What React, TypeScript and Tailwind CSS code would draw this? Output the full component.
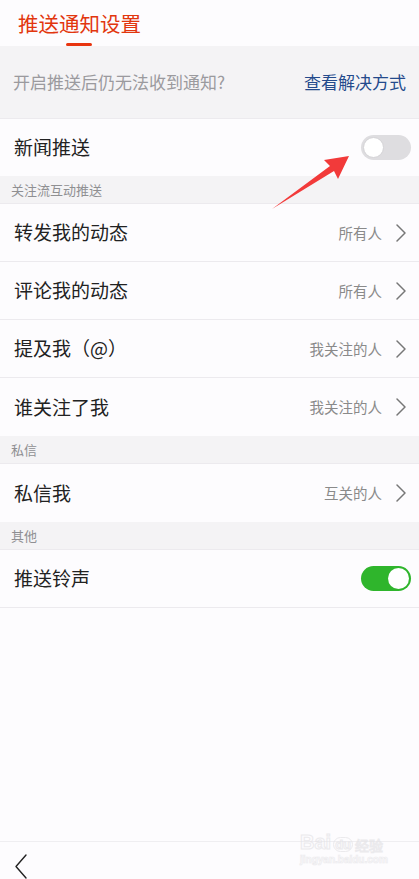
import React from "react";

const font = { fontFamily: '"Noto Sans CJK SC", "Noto Sans", sans-serif' };

function Chevron() {
  return (
    <svg width="12" height="20" viewBox="0 0 12 20" fill="none">
      <path d="M2 2 L10 10 L2 18" stroke="#777" strokeWidth="1.5" strokeLinecap="round" strokeLinejoin="round" />
    </svg>
  );
}

function Toggle({ on }: { on: boolean }) {
  return on ? (
    <div className="w-[50px] h-[25px] rounded-full bg-[#2fb52c] flex items-center justify-end px-[2px]">
      <div className="w-[21px] h-[21px] rounded-full bg-white" />
    </div>
  ) : (
    <div className="w-[50px] h-[25px] rounded-full bg-[#dedde0] flex items-center px-[2px]">
      <div className="w-[21px] h-[21px] rounded-full bg-white border border-[#d4d3d6]" />
    </div>
  );
}

function Section({ title }: { title: string }) {
  return (
    <div className="h-[28px] bg-[#f4f3f5] flex items-center pl-[11px] text-[13px] text-[#8f8f92] border-b border-[#eceaee]">
      {title}
    </div>
  );
}

function NavRow({ label, value, border = true }: { label: string; value: string; border?: boolean }) {
  return (
    <div className={`h-[58px] flex items-center pl-[14px] pr-[12px] bg-[#fdfcfe] ${border ? "border-b border-[#eceaee]" : ""}`}>
      <span className="flex-1 text-[19px] text-[#222]">{label}</span>
      <span className="text-[14.5px] text-[#8a8a8a] mr-[13px]">{value}</span>
      <Chevron />
    </div>
  );
}

function ToggleRow({ label, on }: { label: string; on: boolean }) {
  return (
    <div className="h-[57px] flex items-center pl-[14px] pr-[8px] bg-[#fdfcfe]">
      <span className="flex-1 text-[19px] text-[#222]">{label}</span>
      <Toggle on={on} />
    </div>
  );
}

export default function App() {
  return (
    <div className="relative w-[419px] h-[879px] bg-[#fdfcfe] flex flex-col overflow-hidden" style={font}>
      <div className="h-[46px] pl-[18px] relative">
        <div className="pt-[8px] text-[20.5px] leading-[30px] text-[#e2360e]">推送通知设置</div>
        <div className="absolute left-[66px] top-[43px] w-[26px] h-[3px] bg-[#e8340f] rounded-full" />
      </div>
      <div className="h-[73px] bg-[#f4f3f5] flex items-center justify-between pl-[13px] pr-[13px] border-b border-[#eceaee]">
        <span className="text-[17px] text-[#9b9a9e]">开启推送后仍无法收到通知?</span>
        <span className="text-[17px] text-[#244a8c]">查看解决方式</span>
      </div>
      <ToggleRow label="新闻推送" on={false} />
      <Section title="关注流互动推送" />
      <NavRow label="转发我的动态" value="所有人" />
      <NavRow label="评论我的动态" value="所有人" />
      <NavRow label="提及我（@）" value="我关注的人" />
      <NavRow label="谁关注了我" value="我关注的人" border={false} />
      <Section title="私信" />
      <NavRow label="私信我" value="互关的人" border={false} />
      <Section title="其他" />
      <div className="border-b border-[#eceaee]">
        <ToggleRow label="推送铃声" on={true} />
      </div>
      <div className="flex-1" />
      <div className="h-[38px] border-t border-[#efeef1] pl-[14px] flex items-start pt-[12px]">
        <svg width="14" height="25" viewBox="0 0 14 25" fill="none">
          <path d="M12 1 L2 12.5 L12 24" stroke="#222" strokeWidth="1.4" strokeLinecap="round" strokeLinejoin="round" />
        </svg>
      </div>

      {/* red annotation arrow */}
      <svg className="absolute left-0 top-0 pointer-events-none" width="419" height="879">
        <polygon points="272,209 330,166 324,160 349,156 338,179 334,171" fill="#f23a3a" />
      </svg>

      {/* watermark */}
      <div className="absolute left-[300px] top-[832px] pointer-events-none flex flex-col items-start opacity-70">
        <div className="flex items-end leading-none">
          <span className="text-[20px] font-bold text-transparent" style={{ WebkitTextStroke: "1px #e4e3e6", fontFamily: '"Liberation Sans", sans-serif' }}>Bai</span>
          <span className="ml-[2px] text-[13px] font-bold text-transparent rounded-full border border-[#e4e3e6] px-[1px]" style={{ WebkitTextStroke: "1px #e4e3e6", fontFamily: '"Liberation Sans", sans-serif' }}>du</span>
          <span className="ml-[2px] text-[14px] text-transparent" style={{ WebkitTextStroke: "1px #e4e3e6" }}>经验</span>
        </div>
        <div className="text-[10px] leading-none mt-[3px] text-transparent font-bold" style={{ WebkitTextStroke: "0.7px #e6e5e8", fontFamily: '"Liberation Sans", sans-serif' }}>jingyan.baidu.com</div>
      </div>
    </div>
  );
}
